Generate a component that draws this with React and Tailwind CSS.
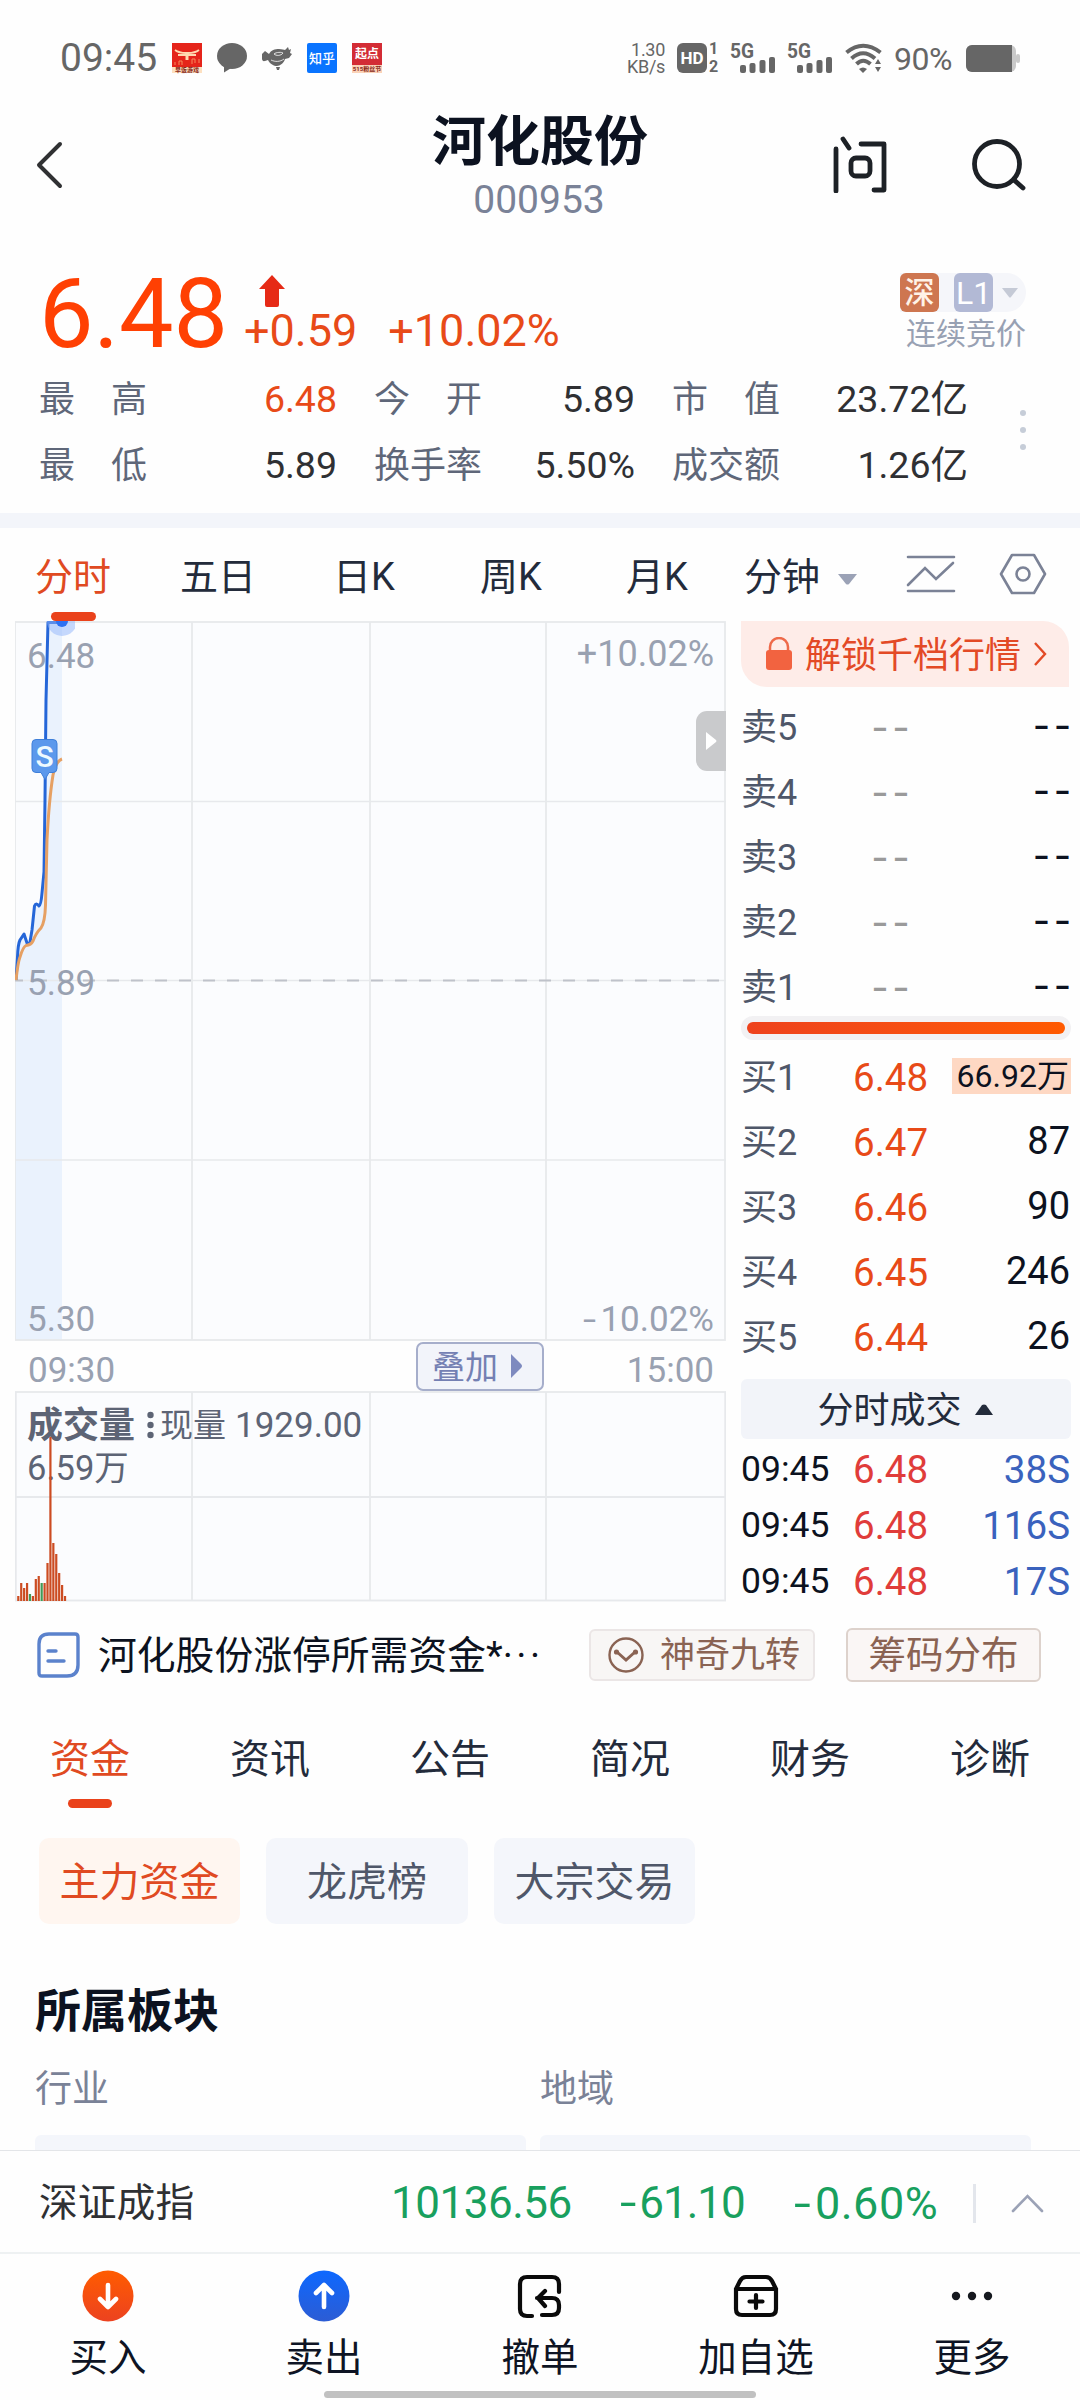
import React from 'react'

const statusGray = "#666666"

const stats = [
  [["最", "高", "6.48", true], ["今", "开", "5.89"], ["市", "值", "23.72亿"]],
  [["最", "低", "5.89"], ["换", "手", "率", "5.50%"], ["成", "交", "额", "1.26亿"]],
]

const sells = ["卖5", "卖4", "卖3", "卖2", "卖1"]

const buys = [
  { label: "买1", price: "6.48", volume: "66.92万", hot: true },
  { label: "买2", price: "6.47", volume: "87" },
  { label: "买3", price: "6.46", volume: "90" },
  { label: "买4", price: "6.45", volume: "246" },
  { label: "买5", price: "6.44", volume: "26" },
]

const trades = [
  { time: "09:45", price: "6.48", volume: "38S" },
  { time: "09:45", price: "6.48", volume: "116S" },
  { time: "09:45", price: "6.48", volume: "17S" },
]

// one bar per minute since the open
const volumes = [5, 18, 13, 18, 7, 5, 22, 25, 18, 18, 38, 164, 58, 47, 28, 16, 5]
const downBars = [4, 8]

const infoTabs = ["资金", "资讯", "公告", "简况", "财务", "诊断"]

const Signal = () => (
  <svg className="overflow-visible" width="46" height="32" viewBox="0 0 46 32" fill={statusGray}>
    <text x="-1" y="15.500" fontSize="20" fontWeight="700" textLength="24" lengthAdjust="spacingAndGlyphs">5G</text>
    <rect x="9" y="23" width="6" height="8" rx="2" />
    <rect x="18.500" y="21" width="6" height="10" rx="2" />
    <rect x="28.500" y="18" width="6" height="13" rx="2" />
    <rect x="38" y="15" width="6" height="16" rx="2" />
  </svg>
)

// wide minus sign in front of negative values
const Minus = () => <span className="inline-block origin-left scale-x-[1.35] pr-[8px]">-</span>

const StatusBar = () => (
  <div className="flex h-[116px] items-center pl-[60px] pr-[60px] text-[#666666]">
    <span className="w-[112px] pt-[1px] text-[39px] leading-none">09:45</span>

    <div className="flex gap-[15px]">
      <div className="flex h-[30px] w-[30px] flex-col bg-[#e5241a]">
        <svg width="30" height="24" viewBox="0 0 30 24" fill="none" stroke="#ffd9b0">
          <path d="M3 7c4 3 7 3 11 3M27 7c-4 3-7 3-11 3M6 12h18" strokeWidth="1.800" />
          <path d="M15 9v8" strokeWidth="3" />
          <path d="M3 22v-3M7 22v-4h3v4M20 21v-5h3v4M27 20v-4" stroke="#f58a5a" />
        </svg>
        <span className="h-[6px] bg-[#fde0c0] text-center text-[6px] font-bold leading-[6px] text-[#8a2a1a]">早饭游戏</span>
      </div>
      <svg width="30" height="30" viewBox="0 0 30 30" fill={statusGray}>
        <ellipse cx="15" cy="13" rx="15" ry="13" />
        <path d="M7 22v7.500l8-5z" />
      </svg>
      <svg width="30" height="30" viewBox="0 0 30 30" fill={statusGray}>
        <path d="M0 11l3-3 4 3c2-4 6-5 10-5 3 0 5 1 6 1l3-3 1 3 2-1-1 4 2 1-3 4-4 1c-1 4-5 7-8 7s-7-2-9-6l-3 1c-4 1-3-4-3-7z" />
        <path d="M12 11c2-2 8-2 9-1-2 3-7 3-9 1z" stroke="#fff" strokeWidth="0.800" fill="none" />
        <path d="M9 17c4 2 9 2 13-1" stroke="#fff" strokeWidth="0.800" fill="none" />
        <path d="M14 24h4l-1 3h-2z" />
      </svg>
      <div className="flex h-[30px] w-[30px] items-center justify-center rounded-[2px] bg-[#0a74ff] text-[13px] font-medium leading-none text-white">知乎</div>
      <div className="flex h-[30px] w-[30px] flex-col bg-[#d32c35] text-center">
        <span className="h-[22px] text-[12px] font-bold leading-[23px] text-white">起点</span>
        <span className="h-[8px] bg-[#fbd3b8] text-[6px] font-bold leading-[8px] text-[#8a2a1a]">515粉丝节</span>
      </div>
    </div>

    <div className="ml-auto flex items-center">
      <div className="w-[38px] text-right text-[18px] leading-[17px] tracking-[-0.3px]">1.30<br />KB/s</div>
      <div className="ml-[12px] flex h-[30px] w-[30px] items-center justify-center rounded-[6px] bg-[#666666] text-[17px] font-bold leading-none text-white">HD</div>
      <div className="ml-[2px] flex w-[12px] flex-col text-[16px] font-bold leading-[18px]">
        <span>1</span>
        <span>2</span>
      </div>
      <div className="ml-[10px] flex gap-[11px]">
        <Signal />
        <Signal />
      </div>
      <svg className="ml-[11px]" width="37" height="30" viewBox="0 0 37 30" fill="none" stroke={statusGray}>
        <path d="M1.500 9.500Q18 -4 35.500 9.500" strokeWidth="4" />
        <path d="M6.500 15.500Q18 5 30 15.500" strokeWidth="4" />
        <path d="M11.500 21Q18 14.500 25.500 21" strokeWidth="4" />
        <path d="M14 26q4-3 8 0l-4 4z" fill={statusGray} stroke="none" />
        <path d="M30 21l3-5 3 5zM30 24h6l-3 5z" fill={statusGray} stroke="none" />
      </svg>
      <span className="ml-[12px] w-[63px] pt-[2px] text-[32px] leading-none tracking-[-0.5px]">90%</span>
      <svg className="ml-[9px]" width="54" height="27" viewBox="0 0 54 27">
        <rect width="50" height="27" rx="6" fill="#c9c9c9" />
        <rect x="50" y="9" width="4" height="9" rx="2" fill="#c9c9c9" />
        <path d="M6 0h40v27H6a6 6 0 0 1-6-6V6a6 6 0 0 1 6-6z" fill={statusGray} />
      </svg>
    </div>
  </div>
)

const Header = () => (
  <div className="grid h-[134px] grid-cols-[1fr_auto_1fr] items-start px-[36px]">
    <svg className="mt-[24px]" width="30" height="50" viewBox="0 0 30 50" fill="none" stroke="#303133" strokeWidth="4" strokeLinecap="round" strokeLinejoin="round">
      <path d="M24 4L3 25l21 21" />
    </svg>
    <div className="flex flex-col items-center">
      <h1 className="-mt-[2px] text-[54px] font-bold leading-[58px] text-[#0c1220]">河化股份</h1>
      <span className="mt-[8px] pr-[2px] text-[39px] leading-[40px] text-[#7a8297]">000953</span>
    </div>
    <div className="mt-[19px] flex justify-end gap-[84px] pr-[17px]">
      <svg width="54" height="58" viewBox="0 0 54 58" fill="none" stroke="#1d2126" strokeWidth="4.800" strokeLinecap="round" strokeLinejoin="round">
        <path d="M3 14v42M10 4l6 9M28 9h23v46H41" />
        <rect x="18" y="23" width="19" height="18" rx="5" />
      </svg>
      <svg width="56" height="58" viewBox="0 0 56 58" fill="none" stroke="#1d2126" strokeWidth="4.800" strokeLinecap="round">
        <circle cx="26" cy="29" r="22.500" />
        <path d="M43 45l9 8" />
      </svg>
    </div>
  </div>
)

const Quote = () => (
  <div className="h-[263px] pl-[39px]">
    <div className="flex h-[116px]">
      <span className="w-[205px] pt-[16px] text-[97px] leading-[96px] text-[#ff4003]">6.48</span>
      <div className="pt-[25px] text-[45px] leading-[46px] text-[#e84a18]">
        <svg className="ml-[15px]" width="26" height="32" viewBox="0 0 26 32">
          <path d="M13 0l13 14h-6v16q0 2-2 2H8q-2 0-2-2V14H0z" fill="#e62a16" />
        </svg>
        <div className="mt-[1px] flex gap-[31px]">
          <span>+0.59</span>
          <span>+10.02%</span>
        </div>
      </div>
      <div className="ml-auto mr-[54px] flex flex-col items-end pt-[23px]">
        <div className="flex items-center rounded-r-full bg-[#f5f6fa] pr-[8px]">
          <span className="flex h-[39px] w-[39px] items-center justify-center rounded-[6px] bg-[#ce7650] text-[30px] font-medium leading-none text-[#fff3e8]">深</span>
          <span className="h-[39px] w-[15px] bg-[#f5f6fa]"></span>
          <span className="flex h-[39px] w-[39px] items-center justify-center rounded-[6px] bg-[#b2b9d5] text-[32px] leading-none text-white">L1</span>
          <svg className="ml-[9px]" width="16" height="10" viewBox="0 0 16 10"><path d="M0 0h16L9 9q-1 1-2 0z" fill="#c5cad6" /></svg>
        </div>
        <span className="mt-[7px] text-[30px] leading-[30px] text-[#98a1b3]">连续竞价</span>
      </div>
    </div>

    <div className="flex">
      <div className="w-[929px]">
        {stats.map((row, i) => (
          <div key={i} className="grid h-[66px] grid-cols-[298px_261px_296px] items-center gap-x-[37px] pt-[2px] text-[36px] leading-none">
            {row.map((cell, j) => {
              const hot = cell[cell.length - 1] === true
              const parts = hot ? cell.slice(0, -1) : cell
              return (
                <div key={j} className="flex items-center justify-between">
                  <span className="flex w-[108px] justify-between text-[#5f6779]">
                    {parts.slice(0, -1).map((c) => <span key={c}>{c}</span>)}
                  </span>
                  <span className={hot ? "text-[37.500px] text-[#e84a18]" : "text-[37.500px] text-[#2f3033]"}>
                    {parts[parts.length - 1]}
                  </span>
                </div>
              )
            })}
          </div>
        ))}
      </div>
      <svg className="ml-[52px] mt-[43px]" width="6" height="42" viewBox="0 0 6 42" fill="#c6cdd8">
        <circle cx="3" cy="4" r="3" />
        <circle cx="3" cy="21" r="3" />
        <circle cx="3" cy="38" r="3" />
      </svg>
    </div>
  </div>
)

const PeriodTabs = () => (
  <div className="flex h-[93px] text-[38px] leading-none text-[#232b3b]">
    <div className="flex w-[146px] flex-col items-center text-[#e04a22]">
      <span className="pt-[30px]">分时</span>
      <span className="mt-[16px] h-[9px] w-[45px] rounded-full bg-[#ea421b]"></span>
    </div>
    <span className="w-[144px] pt-[30px] text-center">五日</span>
    <span className="w-[148px] pt-[30px] text-center">日K</span>
    <span className="w-[146px] pt-[30px] text-center">周K</span>
    <span className="w-[146px] pt-[30px] text-center">月K</span>
    <span className="ml-[14px] pt-[30px]">分钟</span>
    <svg className="ml-[18px] mt-[46px]" width="19" height="11" viewBox="0 0 19 11"><path d="M0 0h19l-8 10q-1.500 1-3 0z" fill="#9ba2b6" /></svg>
    <svg className="ml-[49px] mt-[26px]" width="50" height="40" viewBox="0 0 50 40" fill="none" stroke="#7b8296" strokeWidth="2.600" strokeLinecap="round">
      <path d="M2 3h46M2 37h46M2 31l17-17 11 11 17-16" />
    </svg>
    <svg className="ml-[43px] mt-[24px]" width="48" height="44" viewBox="0 0 48 44" fill="none" stroke="#7b8296" strokeWidth="2.600" strokeLinejoin="round">
      <path d="M13 3h22l11 19-11 19H13L2 22z" />
      <circle cx="24" cy="22" r="6.500" />
    </svg>
  </div>
)

const PriceChart = () => (
  <div className="relative h-[720px] w-[711px] text-[35px] leading-none text-[#99a1b1]">
    <svg className="block" width="711" height="720" viewBox="15 621 711 720">
      <rect x="15" y="621" width="711" height="720" fill="#fbfcfe" />
      <path d="M15 980L17 957L19 943L24 934L27 943L30 943L32 930L35 905L40 904L43 885L45 800L46 700L48 622H62V1340H15z" fill="#eaf2fd" />
      <g stroke="#e7e9ec" strokeWidth="1.800">
        <path d="M192 622V1340M370 622V1340M546 622V1340" />
        <path d="M15 801.500H726M15 1160H726M15 980.500H726" strokeWidth="1.400" />
        <rect x="15" y="622" width="710" height="718" fill="none" />
      </g>
      <path d="M15 980.500H726" stroke="#bfc2ca" strokeWidth="2" strokeDasharray="12 12" strokeDashoffset="4" />
    </svg>
    <span className="absolute left-[12px] top-[18px]">6.48</span>
    <span className="absolute right-[12px] top-[15px] text-[36px]">+10.02%</span>
    <span className="absolute left-[12px] top-[345px]">5.89</span>
    <span className="absolute left-[12px] top-[681px]">5.30</span>
    <span className="absolute bottom-[4px] right-[12px]"><Minus />10.02%</span>
    <svg className="absolute left-0 top-0" width="60" height="370" viewBox="15 621 60 370" fill="none" strokeLinejoin="round">
      <path d="M16 980L17.500 957Q18 944 20 940L24 934L27 943Q29 945 30 942L32 930L34.500 906Q36 902 39 906Q41 905 42 893L44 872L45 800L46 700L48 622.500H62" stroke="#2566d8" strokeWidth="3" />
      <path d="M16 980Q18 962 20 957Q23 947 26 945.500Q31 945 33 941Q36 933 41 928Q45 922 45.500 905L47 840Q49 800 53 775Q56 761 62 759" stroke="#e6a063" strokeWidth="3" />
      <circle cx="62" cy="621" r="15" fill="#8fb4fb" fillOpacity="0.5" />
      <circle cx="62" cy="621" r="6" fill="#2d70f2" />
      <path d="M36 739.500h17q4 0 4 4v25q0 4-4 4h-4l-4 7-4-7h-5q-4 0-4-4v-25q0-4 4-4z" fill="#5b98ec" stroke="#3f7fd9" />
      <text x="44.500" y="767" fontSize="30" fontWeight="500" textAnchor="middle" fill="#eefaff">S</text>
    </svg>
    <div className="absolute right-0 top-[90px] flex h-[60px] w-[30px] items-center justify-center rounded-l-[11px] bg-[#c9cacc]">
      <svg width="12" height="20" viewBox="0 0 12 20"><path d="M1 1l10 8q1 1 0 2L1 19z" fill="#fff" /></svg>
    </div>
  </div>
)

const VolumeChart = () => (
  <div className="relative h-[211px] w-[711px] text-[#5d6475]">
    <svg className="block" width="711" height="211" viewBox="0 0 711 211">
      <rect width="711" height="210" fill="#fbfcfe" />
      <g stroke="#e7e9ec" strokeWidth="1.800" fill="none">
        <rect x="0.800" y="1" width="709.400" height="208.500" />
        <path d="M177 1V209M355 1V209M531 1V209M0 106H711" />
      </g>
    </svg>
    <div className="absolute left-[12px] top-[17px] flex items-center leading-[36px]">
      <span className="text-[36px] font-bold">成交量</span>
      <svg className="-mt-[3px] ml-[12px] mr-[6px]" width="7" height="28" viewBox="0 0 7 28" fill="#5d6475">
        <circle cx="3.500" cy="4" r="3.200" />
        <circle cx="3.500" cy="14" r="3.200" />
        <circle cx="3.500" cy="24" r="3.200" />
      </svg>
      <span className="text-[33px]">现量</span>
      <span className="ml-[9px] text-[35px]">1929.00</span>
    </div>
    <span className="absolute left-[12px] top-[60px] text-[34.500px] leading-none">6.59万</span>
    <svg className="absolute left-0 top-0" width="60" height="211" viewBox="0 0 60 211">
      {volumes.map((v, i) => (
        <rect key={i} x={2.200 + i * 2.920} y={210 - v} width="2.200" height={v} fill={downBars.includes(i) ? "#3f9a57" : "#cc4c22"} />
      ))}
    </svg>
  </div>
)

const OrderBook = () => (
  <div className="ml-[15px] w-[330px] text-[#4f5769]">
    <div className="flex h-[66px] w-[328px] items-center rounded-bl-[26px] rounded-tr-[26px] bg-[#feece8] pl-[24px] leading-none text-[#e34a26]">
      <svg width="28" height="34" viewBox="0 0 28 34">
        <path d="M5 14V10a9 9 0 0 1 18 0v4" fill="none" stroke="#ee6a4a" strokeWidth="2.500" />
        <rect x="1" y="13" width="26" height="20" rx="3" fill="#f26340" />
      </svg>
      <span className="ml-[12px] pt-[3px] text-[36px]">解锁千档行情</span>
      <svg className="ml-[12px]" width="14" height="26" viewBox="0 0 14 26" fill="none" stroke="#e34a26" strokeWidth="2.400"><path d="M2 2l10 11L2 24" /></svg>
    </div>

    <div className="mt-[8px]">
      {sells.map((label) => (
        <div key={label} className="grid h-[65px] grid-cols-[132px_1fr_auto] items-center text-[36px] leading-none">
          <span className="pt-[1px]">{label}</span>
          <span><span className="inline-block origin-left scale-x-[1.15] text-[44px] tracking-[6px] text-[#9a9a9a]">--</span></span>
          <span className="-mr-[5px] -mt-[4px] inline-block origin-right scale-x-[1.15] text-[44px] tracking-[6px] text-[#0c1220]">--</span>
        </div>
      ))}
    </div>

    <div className="mt-[-4px] h-[24px] rounded-full bg-[#f2f1f3] p-[6px]">
      <div className="h-[12px] rounded-full bg-gradient-to-r from-[#ee421c] to-[#ff5a00]"></div>
    </div>

    <div className="mt-[5px]">
      {buys.map((b) => (
        <div key={b.label} className="grid h-[65px] grid-cols-[112px_1fr_auto] items-center text-[36px] leading-none">
          <span className="pt-[1px]">{b.label}</span>
          <span className="pt-[1px] text-[38.500px] text-[#e84a18]">{b.price}</span>
          {b.hot
            ? <span className="-mt-[4px] flex h-[36px] w-[119px] items-center justify-end bg-[#fed8c3] pr-[2px] text-[32px] text-[#0c1220]">{b.volume}</span>
            : <span className="-mt-[3px] pr-[1px] text-[38px] text-[#0c1220]">{b.volume}</span>}
        </div>
      ))}
    </div>

    <div className="mt-[9px] flex h-[60px] items-center justify-center rounded-[6px] bg-[#f2f4f9] pr-[2px] text-[36px] leading-none text-[#232b3b]">
      <span className="pt-[4px]">分时成交</span>
      <svg className="ml-[13px]" width="18" height="11" viewBox="0 0 18 11"><path d="M0 11h18L11 1q-2-1-4 0z" fill="#232b3b" /></svg>
    </div>

    <div className="mt-[2px]">
      {trades.map((t, i) => (
        <div key={i} className="grid h-[56px] grid-cols-[112px_1fr_auto] items-center pt-[2px] leading-none">
          <span className="text-[35.500px] text-[#0c1220]">{t.time}</span>
          <span className="text-[38.500px] text-[#e03c3a]">{t.price}</span>
          <span className="pr-[1px] text-[38.500px] text-[#3a62bd]">{t.volume}</span>
        </div>
      ))}
    </div>
  </div>
)

const NewsRow = () => (
  <div className="flex h-[106px] items-center pl-[37px] leading-none">
    <svg width="43" height="46" viewBox="0 0 43 46" fill="none" stroke="#5b82cc" strokeWidth="3.400" strokeLinecap="round">
      <path d="M12 2h26q3 0 3 3v28q0 11-11 11H5q-3 0-3-3V12Q2 2 12 2z" />
      <path d="M11 19h8M11 29h16" />
    </svg>
    <span className="ml-[18px] w-[448px] whitespace-nowrap pt-[2px] text-[38.800px] text-[#0c1220]">河化股份涨停所需资金*<span className="tracking-[3.500px]">···</span></span>
    <div className="ml-[43px] flex h-[52px] w-[226px] items-center rounded-[6px] border-2 border-[#ebe6e6] bg-[#f8f6f5] pl-[17px] text-[#8a6353]">
      <svg width="36" height="36" viewBox="0 0 36 36" fill="none" stroke="#8a6353" strokeWidth="2.400">
        <circle cx="18" cy="18" r="16.500" />
        <path d="M9 15l9 8 9-8" strokeWidth="3" strokeLinecap="round" />
        <circle cx="8.500" cy="15" r="1.400" />
        <circle cx="27.500" cy="15" r="1.400" />
      </svg>
      <span className="ml-[16px] pt-[1px] text-[35px]">神奇九转</span>
    </div>
    <div className="ml-[31px] flex h-[54px] w-[195px] items-center justify-center rounded-[6px] border-2 border-[#ddd2cc] bg-[#faf6f5] pt-[1px] text-[37.500px] text-[#8a6353]">筹码分布</div>
  </div>
)

const InfoSection = () => (
  <div className="flex h-[442px] flex-col overflow-hidden">
    <div className="grid h-[101px] grid-cols-6 text-[40px] leading-none text-[#232b3b]">
      {infoTabs.map((tab, i) => (
        <div key={tab} className={i === 0 ? "flex flex-col items-center pt-[32px] text-[#e04a22]" : "flex flex-col items-center pt-[32px]"}>
          <span>{tab}</span>
          {i === 0 && <span className="mt-[19px] h-[9px] w-[44px] rounded-full bg-[#ea421b]"></span>}
        </div>
      ))}
    </div>

    <div className="mt-[30px] flex gap-[26px] pl-[39px] text-[40px] leading-none text-[#4f5769]">
      <div className="flex h-[86px] w-[201px] items-center justify-center rounded-[10px] bg-[#fff6f0] pt-[3px] text-[#e04a22]">主力资金</div>
      <div className="flex h-[86px] w-[202px] items-center justify-center rounded-[10px] bg-[#f4f6fb] pt-[3px]">龙虎榜</div>
      <div className="flex h-[86px] w-[201px] items-center justify-center rounded-[10px] bg-[#f4f6fb] pt-[3px]">大宗交易</div>
    </div>

    <h2 className="mt-[64px] pl-[35px] text-[46px] font-bold leading-[46px] text-[#0c1220]">所属板块</h2>
    <div className="mt-[37px] grid grid-cols-[491px_491px] gap-x-[14px] pl-[35px] text-[37px] leading-[37px] text-[#7a8297]">
      <span>行业</span>
      <span>地域</span>
      <div className="mt-[27px] h-[60px] rounded-[6px] bg-[#f4f6fb]"></div>
      <div className="mt-[27px] h-[60px] rounded-[6px] bg-[#f4f6fb]"></div>
    </div>
  </div>
)

const IndexBar = () => (
  <div className="flex h-[104px] items-center border-b-2 border-t border-b-[#eef1f2] border-t-[#e3e5e8] pl-[39px] pt-[3px] leading-none text-[#18a05e]">
    <span className="w-[352px] text-[38.800px] text-[#2f3033]">深证成指</span>
    <span className="w-[229px] text-[44px] tracking-[-0.500px]">10136.56</span>
    <span className="w-[174px] text-[44px] tracking-[-1px]"><Minus />61.10</span>
    <span className="w-[179px] text-[45px] tracking-[0.500px]"><Minus />0.60%</span>
    <span className="h-[39px] w-[3px] bg-[#e3e6ec]"></span>
    <svg className="ml-[35px]" width="33" height="20" viewBox="0 0 33 20" fill="none" stroke="#9ba2b6" strokeWidth="2.600" strokeLinecap="round"><path d="M2 18L16.500 3 31 18" /></svg>
  </div>
)

const NavItem = ({ label, children }) => (
  <div className="flex flex-col items-center">
    <svg className="mt-[15px]" width="54" height="54" viewBox="0 0 54 54" fill="none" strokeLinecap="round" strokeLinejoin="round">
      {children}
    </svg>
    <span className="mt-[15px] text-[38.500px] leading-[40px] text-[#0e1424]">{label}</span>
  </div>
)

const BottomNav = () => (
  <div className="h-[147px]">
    <div className="grid h-[137px] grid-cols-5">
      <NavItem label="买入">
        <defs>
          <linearGradient id="buy" x2="0" y2="1"><stop stopColor="#ff5c00" /><stop offset="1" stopColor="#ec4220" /></linearGradient>
        </defs>
        <circle cx="27" cy="27" r="25.500" fill="url(#buy)" />
        <path d="M27 16v22M19 30l8 8 8-8" stroke="#fff" strokeWidth="4.600" />
      </NavItem>
      <NavItem label="卖出">
        <defs>
          <linearGradient id="sell" x2="0" y2="1"><stop stopColor="#0d68ff" /><stop offset="1" stopColor="#2c5cd4" /></linearGradient>
        </defs>
        <circle cx="27" cy="27" r="25.500" fill="url(#sell)" />
        <path d="M27 38V16M19 24l8-8 8 8" stroke="#fff" strokeWidth="4.600" />
      </NavItem>
      <NavItem label="撤单">
        <path d="M19 47h-5q-7 0-7-7V15q0-7 7-7h25q7 0 7 7v8M29 46h10q7 0 7-7v-3q0-7-7-7H24M32 22l-7 7 7 8" stroke="#0a0a0a" strokeWidth="4.200" />
      </NavItem>
      <NavItem label="加自选">
        <path d="M7 20v20q0 6 6 6h28q6 0 6-6V20zM7 20l4-8q2-4 6-4h20q4 0 6 4l4 8M27 26v13M20.500 32.500h13" stroke="#0a0a0a" strokeWidth="4.200" />
      </NavItem>
      <NavItem label="更多">
        <g fill="#15181e">
          <circle cx="11" cy="27" r="4.200" />
          <circle cx="27" cy="27" r="4.200" />
          <circle cx="43" cy="27" r="4.200" />
        </g>
      </NavItem>
    </div>
    <div className="mx-auto h-[7px] w-[432px] rounded-full bg-[#c1c1c1]"></div>
  </div>
)

const App = () => {
  return (
    <div className="h-[2400px] w-[1080px] overflow-hidden bg-[#fefefe] font-['Roboto','Noto_Sans_CJK_SC',sans-serif]">
      <StatusBar />
      <Header />
      <Quote />
      <div className="h-[15px] bg-[#f3f5fa]"></div>
      <PeriodTabs />

      <div className="flex h-[981px] pl-[15px]">
        <div className="w-[711px]">
          <PriceChart />
          <div className="flex h-[50px] items-center pl-[13px] pr-[12px] text-[35px] leading-none text-[#99a1b1]">
            <span className="w-[388px] pt-[8px]">09:30</span>
            <div className="flex h-[49px] w-[128px] items-center rounded-[7px] border-2 border-[#a6aecb] bg-[#f2f4fa] pl-[14px] text-[33px] text-[#7480b3]">
              <span className="pt-[2px]">叠加</span>
              <svg className="ml-[12px]" width="13" height="24" viewBox="0 0 13 24"><path d="M1 0l10 10q2 2 0 4L1 24z" fill="#7e8abf" /></svg>
            </div>
            <span className="ml-auto pt-[8px]">15:00</span>
          </div>
          <VolumeChart />
        </div>
        <OrderBook />
      </div>

      <NewsRow />
      <InfoSection />
      <IndexBar />
      <BottomNav />
    </div>
  )
}

export default App
